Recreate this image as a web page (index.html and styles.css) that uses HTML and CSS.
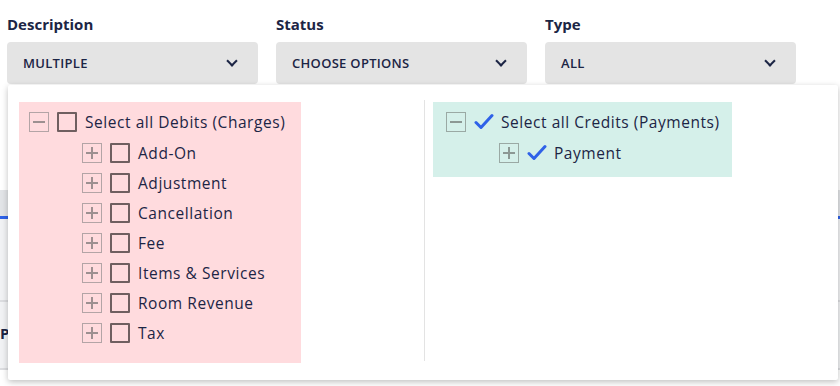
FILE: index.html
```html
<!DOCTYPE html>
<html lang="en">
<head>
    <meta charset="UTF-8">
    <meta name="viewport" content="width=device-width, initial-scale=1.0">
    <title>Transaction Filters</title>
    <link rel="stylesheet" href="styles.css">
</head>
<body>
    <div class="filtros">
        <div class="campo">
            <label>Description</label>
            <div class="select">MULTIPLE <span class="seta"></span></div>
        </div>
        <div class="campo">
            <label>Status</label>
            <div class="select">CHOOSE OPTIONS <span class="seta"></span></div>
        </div>
        <div class="campo">
            <label>Type</label>
            <div class="select">ALL <span class="seta"></span></div>
        </div>
    </div>

    <!-- tabela que fica atras do popup -->
    <div class="fundo">
        <div class="faixa"></div>
        <div class="aba"></div>
        <div class="linhas"></div>
        <div class="cabecalho">P</div>
    </div>

    <div class="popup">
        <div class="coluna">
            <div class="grupo debitos">
                <div class="item">
                    <span class="expandir menos"></span>
                    <span class="caixa"></span>
                    Select all Debits (Charges)
                </div>
                <div class="item filho"><span class="expandir mais"></span><span class="caixa"></span>Add-On</div>
                <div class="item filho"><span class="expandir mais"></span><span class="caixa"></span>Adjustment</div>
                <div class="item filho"><span class="expandir mais"></span><span class="caixa"></span>Cancellation</div>
                <div class="item filho"><span class="expandir mais"></span><span class="caixa"></span>Fee</div>
                <div class="item filho"><span class="expandir mais"></span><span class="caixa"></span>Items &amp; Services</div>
                <div class="item filho"><span class="expandir mais"></span><span class="caixa"></span>Room Revenue</div>
                <div class="item filho"><span class="expandir mais"></span><span class="caixa"></span>Tax</div>
            </div>
        </div>
        <div class="divisor"></div>
        <div class="coluna">
            <div class="grupo creditos">
                <div class="item">
                    <span class="expandir menos"></span>
                    <svg class="check" viewBox="0 0 20 20"><path d="M2 10.5l5 5L18 3.5" fill="none" stroke="#2f62e8" stroke-width="3" stroke-linecap="round" stroke-linejoin="round"/></svg>
                    Select all Credits (Payments)
                </div>
                <div class="item filho">
                    <span class="expandir mais"></span>
                    <svg class="check" viewBox="0 0 20 20"><path d="M2 10.5l5 5L18 3.5" fill="none" stroke="#2f62e8" stroke-width="3" stroke-linecap="round" stroke-linejoin="round"/></svg>
                    Payment
                </div>
            </div>
        </div>
    </div>
</body>
</html>
```

FILE: styles.css
```css
/* Estilo Geral */
body {
    font-family: "Open Sans", sans-serif;
    background-color: #fff;
    color: #1c2545;
    margin: 0;
    padding: 0;
    width: 840px;
    height: 386px;
    overflow: hidden;
    position: relative;
}

.filtros {
    display: flex;
    gap: 18px;
    padding: 14px 0 0 7px;
}

.campo {
    width: 251px;
}

.campo label {
    display: block;
    font-weight: 700;
    font-size: 15px;
    line-height: 20px;
    margin-bottom: 8px;
}

.select {
    height: 42px;
    background: #e4e4e4;
    border-radius: 4px;
    display: flex;
    align-items: center;
    justify-content: space-between;
    padding: 0 16px;
    font-size: 13px;
    font-weight: 600;
    letter-spacing: 0.3px;
}

.seta {
    width: 6px;
    height: 6px;
    border-right: 2px solid #1c2545;
    border-bottom: 2px solid #1c2545;
    transform: rotate(45deg);
    margin: -4px 6px 0 0;
}

/* tabela atras */
.fundo {
    margin-top: 106px;
}

.faixa {
    height: 26px;
    background: #e2e4e7;
}

.aba {
    height: 3px;
    background: #2f62e8;
}

.linhas {
    height: 81px;
    background: #f1f2f4;
    border-bottom: 2px solid #dcdde0;
}

.cabecalho {
    height: 66px;
    line-height: 62px;
    font-weight: 700;
    font-size: 15px;
    background: #f1f2f4;
    border-bottom: 2px solid #dcdde0;
    padding-left: 838px;
    text-indent: -838px;
}

/* popup por cima */
.popup {
    position: absolute;
    left: 8px;
    top: 85px;
    width: 830px;
    height: 295px;
    background: #fff;
    border-radius: 2px;
    box-shadow: 0 2px 6px rgba(0, 0, 0, 0.25);
    display: flex;
    padding: 17px 0 0 11px;
    box-sizing: border-box;
}

.coluna {
    width: 406px;
}

.coluna:last-child {
    padding-left: 8px;
}

.divisor {
    width: 1px;
    background: #e3e3e3;
    margin: -2px 0 19px 0;
}

.grupo {
    padding: 5px 0 0 10px;
    box-sizing: border-box;
}

.debitos {
    background: #ffdbde;
    width: 282px;
    height: 261px;
}

.creditos {
    background: #d5f0ea;
    width: 299px;
    height: 75px;
    padding-left: 13px;
}

.item {
    display: flex;
    align-items: center;
    height: 30px;
    font-size: 15.5px;
    letter-spacing: 0.55px;
    white-space: nowrap;
}

.item:first-child {
    margin-bottom: 1px;
}

.item.filho {
    padding-left: 53px;
}

.expandir {
    width: 18px;
    height: 18px;
    border: 1px solid #b3a4a6;
    position: relative;
    margin-right: 8px;
    flex-shrink: 0;
}

.creditos .expandir {
    border-color: #9aa9a4;
}

.expandir::before,
.expandir::after {
    content: "";
    position: absolute;
    background: #9d9091;
}

.creditos .expandir::before,
.creditos .expandir::after {
    background: #8c9894;
}

.expandir::before {
    left: 3px;
    right: 3px;
    top: 8px;
    height: 2px;
}

.mais::after {
    top: 3px;
    bottom: 3px;
    left: 8px;
    width: 2px;
}

.caixa {
    width: 16px;
    height: 16px;
    border: 2px solid #6f5f60;
    border-radius: 1px;
    margin-right: 8px;
    flex-shrink: 0;
}

.check {
    width: 20px;
    height: 20px;
    margin-right: 7px;
    flex-shrink: 0;
}
```
